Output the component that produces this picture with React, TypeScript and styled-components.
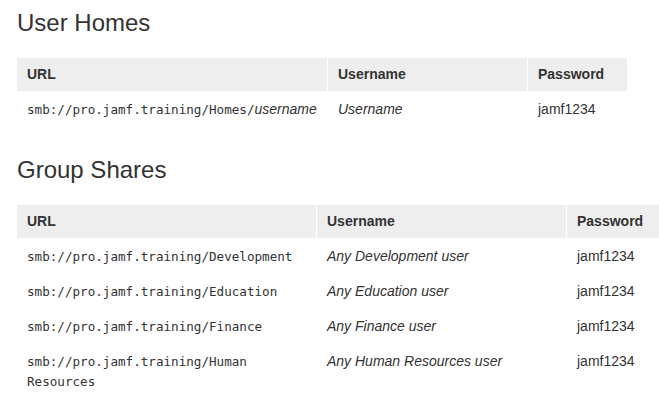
import styled, { createGlobalStyle } from 'styled-components';

const GlobalStyle = createGlobalStyle`
  html, body {
    margin: 0;
    padding: 0;
    background: #ffffff;
    overflow: hidden;
  }
  body {
    font-family: 'Liberation Sans', Arial, sans-serif;
    color: #333333;
  }
`;

const Page = styled.main`
  padding: 10px 0 0 17px;
`;

const Heading = styled.h2<{ first?: boolean }>`
  margin: ${(props) => (props.first ? '0' : '31px')} 0 22px;
  font-size: 24px;
  line-height: 26px;
  font-weight: normal;
  color: #333333;
`;

const ShareTable = styled.table<{ total: number }>`
  table-layout: fixed;
  width: ${(props) => props.total}px;
  border-collapse: separate;
  border-spacing: 0;
  font-family: 'Liberation Sans', Arial, sans-serif;
  font-size: 14px;
  color: #333333;
`;

const HeadCell = styled.th`
  background: #eeeeee;
  text-align: left;
  font-weight: bold;
  line-height: 17px;
  padding: 8px 10px;
  & + & {
    border-left: 1px solid #ffffff;
  }
`;

const Cell = styled.td`
  vertical-align: top;
  line-height: 20px;
  padding: 8px 10px 7px;
  & + & {
    border-left: 1px solid #ffffff;
  }
`;

// share paths are monospace; line-height 1 keeps the row on the 20px strut
const Path = styled.code`
  font-family: 'DejaVu Sans Mono', 'Liberation Mono', monospace;
  font-size: 12.6px;
  line-height: 1;
`;

const Hint = styled.em`
  font-family: 'Liberation Sans', Arial, sans-serif;
  font-size: 14px;
  font-style: italic;
`;

interface Share {
  path: string;
  user: string;
  password: string;
}

const groupShares: Share[] = [
  { path: 'smb://pro.jamf.training/Development', user: 'Any Development user', password: 'jamf1234' },
  { path: 'smb://pro.jamf.training/Education', user: 'Any Education user', password: 'jamf1234' },
  { path: 'smb://pro.jamf.training/Finance', user: 'Any Finance user', password: 'jamf1234' },
  { path: 'smb://pro.jamf.training/Human Resources', user: 'Any Human Resources user', password: 'jamf1234' },
];

const TableHead = ({ widths }: { widths: number[] }) => (
  <>
    <colgroup>
      {widths.map((w, i) => (
        <col key={i} style={{ width: w }} />
      ))}
    </colgroup>
    <thead>
      <tr>
        <HeadCell>URL</HeadCell>
        <HeadCell>Username</HeadCell>
        <HeadCell>Password</HeadCell>
      </tr>
    </thead>
  </>
);

const sum = (list: number[]) => list.reduce((a, b) => a + b, 0);

export default function App() {
  const homeCols = [310, 200, 100];
  const groupCols = [299, 250, 100];

  return (
    <Page>
      <GlobalStyle />
      <Heading first>User Homes</Heading>
      <ShareTable total={sum(homeCols)}>
        <TableHead widths={homeCols} />
        <tbody>
          <tr>
            <Cell>
              <Path>
                smb://pro.jamf.training/Homes/<Hint>username</Hint>
              </Path>
            </Cell>
            <Cell>
              <Hint>Username</Hint>
            </Cell>
            <Cell>jamf1234</Cell>
          </tr>
        </tbody>
      </ShareTable>

      <Heading>Group Shares</Heading>
      <ShareTable total={sum(groupCols)}>
        <TableHead widths={groupCols} />
        <tbody>
          {groupShares.map((share) => (
            <tr key={share.path}>
              <Cell>
                <Path>{share.path}</Path>
              </Cell>
              <Cell>
                <Hint>{share.user}</Hint>
              </Cell>
              <Cell>{share.password}</Cell>
            </tr>
          ))}
        </tbody>
      </ShareTable>
    </Page>
  );
}
